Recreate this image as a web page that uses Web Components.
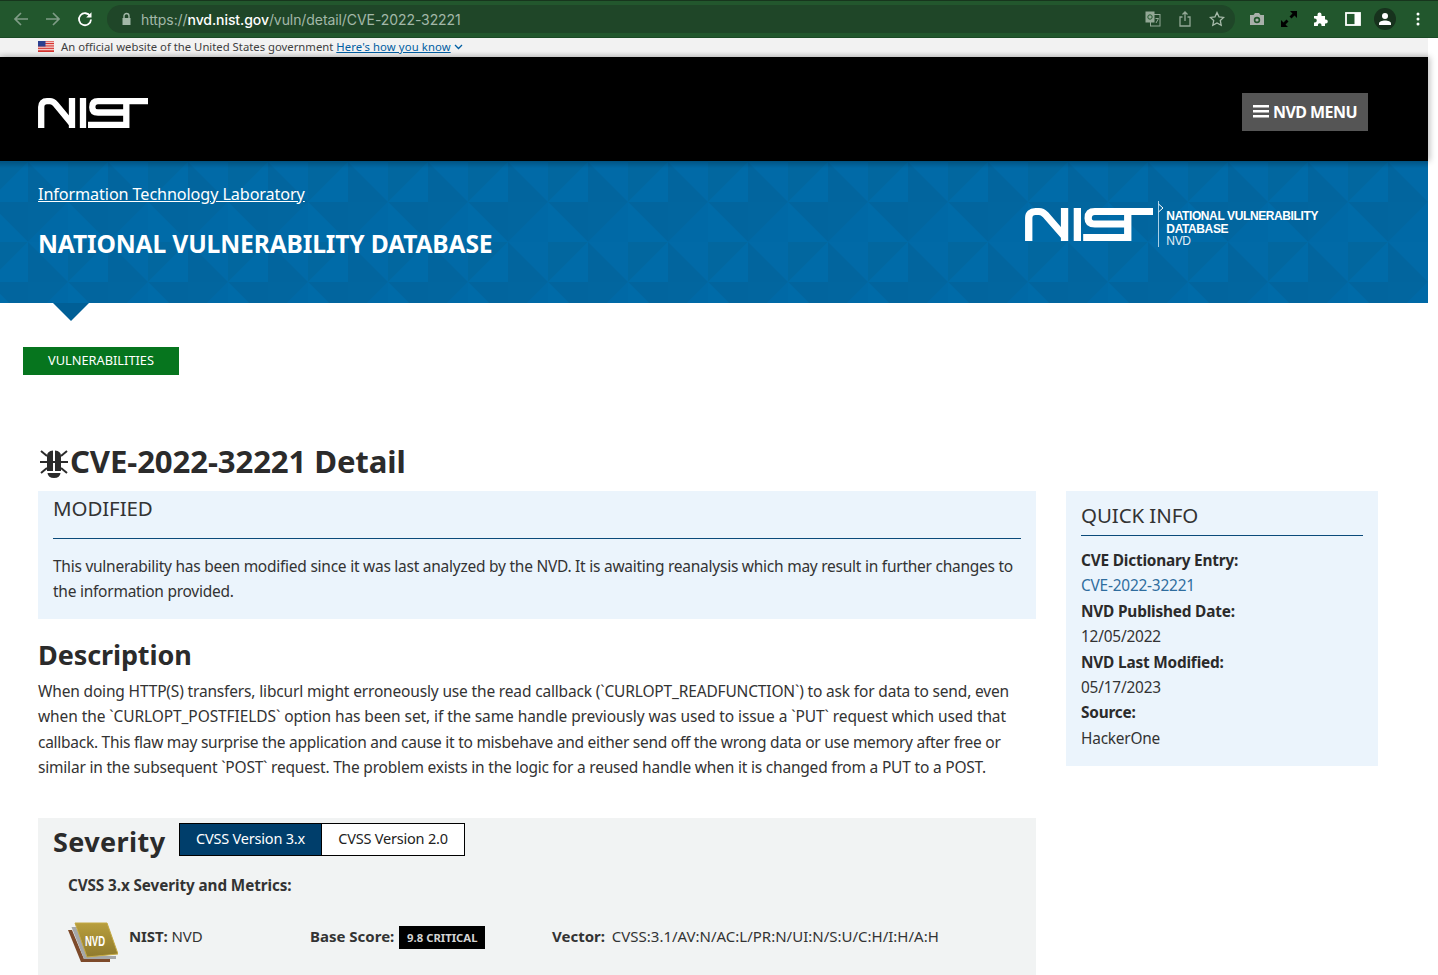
<!DOCTYPE html>
<html lang="en">
<head>
<meta charset="utf-8">
<title>NVD - CVE-2022-32221</title>
<style>
  html, body { margin: 0; height: 975px; overflow: hidden; background: #fff; }
  body { font-family: "Noto Sans", "Liberation Sans", sans-serif; color: #2b2b2b; }
  .content { display: flex; gap: 30px; padding-left: 38px; width: 1340px; box-sizing: border-box; }
  .left { width: 998px; flex: none; }
  .l1 { letter-spacing: -.163px; }
  .l2 { letter-spacing: -.09px; }
  .l3 { letter-spacing: -.265px; }
</style>
</head>
<body>
<browser-bar></browser-bar>
<gov-banner></gov-banner>
<nist-header></nist-header>
<nvd-banner></nvd-banner>
<nav-tab>VULNERABILITIES</nav-tab>
<page-title>CVE-2022-32221 Detail</page-title>
<div class="content">
  <div class="left">
    <status-box heading="MODIFIED">This vulnerability has been modified since it was last analyzed by the NVD. It is awaiting reanalysis which may result in further changes to<br>the information provided.</status-box>
    <vuln-description><span class="l1">When doing HTTP(S) transfers, libcurl might erroneously use the read callback (`CURLOPT_READFUNCTION`) to ask for data to send, even</span><br><span class="l2">when the `CURLOPT_POSTFIELDS` option has been set, if the same handle previously was used to issue a `PUT` request which used that</span><br><span class="l3">callback. This flaw may surprise the application and cause it to misbehave and either send off the wrong data or use memory after free or</span><br>similar in the subsequent `POST` request. The problem exists in the logic for a reused handle when it is changed from a PUT to a POST.</vuln-description>
    <severity-panel></severity-panel>
  </div>
  <quick-info></quick-info>
</div>

<script>
const NIST_LOGO = `
  <g fill="none" stroke="currentColor" stroke-width="6.300">
    <path d="M3.200 30V9Q3.200 3.200 9 3.200H12Q15 3.200 17.500 6L34 26"/>
    <path d="M34 0V30"/>
    <path d="M45 0V30"/>
    <path d="M110 3.200H60Q54.300 3.200 54.300 9V9.500Q54.300 14.500 60 14.500H88"/>
    <path d="M88.300 3V30"/>
    <path d="M91 26.800H50"/>
  </g>`;

class BrowserBar extends HTMLElement {
  constructor() {
    super();
    this.attachShadow({ mode: "open" }).innerHTML = `
      <style>
        :host { display: flex; align-items: center; height: 38px; box-sizing: border-box; background: #22572d; border-top: 1px solid #17351d; border-bottom: 1px solid #1a4a25; }
        svg { display: block; flex: none; }
        .nav { display: flex; gap: 16px; padding-left: 13px; align-items: center; }
        .omni { margin-left: 14px; width: 1128px; height: 28px; background: #1f4628; border-radius: 14px; display: flex; align-items: center; box-sizing: border-box; padding: 0 10px 0 14px; }
        .url { font: 14px Inter, "Liberation Sans", sans-serif; letter-spacing: -.08px; color: #a3b8a8; margin-left: 9px; flex: 1; white-space: nowrap; }
        .url b { color: #fff; font-weight: 500; }
        .omni-icons { display: flex; gap: 16px; }
        .tools { display: flex; align-items: center; gap: 16px; margin-left: 14px; }
        .avatar { width: 22px; height: 22px; border-radius: 50%; background: #17321d; display: flex; align-items: center; justify-content: center; margin-left: -3px; }
      </style>
      <div class="nav">
        <svg width="16" height="16" viewBox="0 0 16 16" fill="none" stroke="#7f9c86" stroke-width="1.700"><path d="M15 8H2M8 2 2 8l6 6"/></svg>
        <svg width="16" height="16" viewBox="0 0 16 16" fill="none" stroke="#7f9c86" stroke-width="1.700"><path d="M1 8h13M8 2l6 6-6 6"/></svg>
        <svg width="16" height="16" viewBox="0 0 16 16" fill="none" stroke="#fff" stroke-width="1.800"><path d="M13.200 5.200A6 6 0 1 0 14 8.500"/><path d="M14.500 1.200v5.300H9.200" fill="#fff" stroke="none"/></svg>
      </div>
      <div class="omni">
        <svg width="11" height="14" viewBox="0 0 11 14"><path d="M1.500 6h8v7h-8z" fill="#a3b8a8"/><path d="M3 6V4a2.500 2.500 0 0 1 5 0v2" fill="none" stroke="#a3b8a8" stroke-width="1.400"/></svg>
        <span class="url">https://<b>nvd.nist.gov</b>/vuln/detail/CVE-2022-32221</span>
        <div class="omni-icons">
          <svg width="16" height="16" viewBox="0 0 16 16"><rect x="5.500" y="3.500" width="9.500" height="11.500" fill="none" stroke="#93a896"/><rect x="0.500" y="0.500" width="9" height="11" fill="#93a896"/><circle cx="5" cy="6" r="2.200" fill="none" stroke="#22572d"/><path d="M10.500 7.500h3M11 12l2.500-4.500" stroke="#93a896"/></svg>
          <svg width="16" height="16" viewBox="0 0 16 16" fill="none" stroke="#93a896" stroke-width="1.300"><path d="M5.500 6H3v9h10V6h-2.500M8 10V1M5.500 3.500 8 1l2.500 2.500"/></svg>
          <svg width="16" height="16" viewBox="0 0 16 16" fill="none" stroke="#a8bbab" stroke-width="1.300"><path d="m8 1.500 2 4.300 4.700.6-3.400 3.200.9 4.700L8 12l-4.200 2.300.9-4.700L1.300 6.400 6 5.800z"/></svg>
        </div>
      </div>
      <div class="tools">
        <svg width="16" height="16" viewBox="0 0 16 16"><path d="M1 4h3.500L6 2h4l1.500 2H15v10H1z" fill="#a8b0aa"/><circle cx="8" cy="9" r="2.400" fill="none" stroke="#22572d" stroke-width="1.600"/></svg>
        <svg width="16" height="16" viewBox="0 0 16 16" fill="#000"><path d="M9 0h7v7l-2.500-2.500-3 3L8.500 5.500l3-3zM7 16H0V9l2.500 2.500 3-3 2 2-3 3z"/></svg>
        <svg width="16" height="16" viewBox="0 0 16 16" fill="#fff"><path d="M1 5h3.500V3.500a2 2 0 0 1 4 0V5H12v3.500h.8a2 2 0 0 1 0 4H12V15H8.500v-1a1.800 1.800 0 0 0-3.600 0v1H1v-3.500h.8a2 2 0 0 0 0-4H1z"/></svg>
        <svg width="16" height="16" viewBox="0 0 16 16"><rect x="1" y="2" width="14" height="12" fill="none" stroke="#fff" stroke-width="1.800"/><rect x="9.500" y="2" width="5.500" height="12" fill="#fff"/></svg>
        <div class="avatar"><svg width="14" height="14" viewBox="0 0 14 14" fill="#fff"><circle cx="7" cy="4" r="3"/><path d="M1 13v-1.500C1 9.500 4 8.500 7 8.500s6 1 6 3V13z"/></svg></div>
        <svg width="4" height="14" viewBox="0 0 4 14" fill="#fff" style="margin-left:4px"><circle cx="2" cy="2" r="1.500"/><circle cx="2" cy="7" r="1.500"/><circle cx="2" cy="12" r="1.500"/></svg>
      </div>
    `;
  }
}

class GovBanner extends HTMLElement {
  constructor() {
    super();
    this.attachShadow({ mode: "open" }).innerHTML = `
      <style>
        :host { display: flex; align-items: center; width: 1428px; height: 19px; box-sizing: border-box; padding: 0 0 2px 38px; background: linear-gradient(#f2f2f2 70%, #e2e2e2); font-size: 11.300px; color: #404040; white-space: nowrap; }
        svg { flex: none; margin-right: 7px; }
        a { color: #005ea2; margin-left: 3px; text-decoration: underline; letter-spacing: .1px; }
        .chev { margin: 0 0 0 3px; }
      </style>
      <svg width="16" height="11" viewBox="0 0 16 11"><rect width="16" height="11" fill="#fff"/><path d="M0 .8h16M0 2.500h16M0 4.200h16M0 5.900h16M0 7.600h16M0 9.300h16M0 10.500h16" stroke="#d5342f"/><rect width="7.500" height="5.500" fill="#2c3f8f"/></svg>
      <span>An official website of the United States government</span>
      <a href="#">Here's how you know </a>
      <svg class="chev" width="9" height="6" viewBox="0 0 9 6" fill="none" stroke="#005ea2" stroke-width="1.300"><path d="m1 1 3.500 3.500L8 1"/></svg>
    `;
  }
}

class NistHeader extends HTMLElement {
  constructor() {
    super();
    this.attachShadow({ mode: "open" }).innerHTML = `
      <style>
        :host { display: flex; align-items: center; justify-content: space-between; width: 1428px; height: 104px; box-sizing: border-box; padding: 0 60px 0 38px; background: #000; color: #fff; box-shadow: 2px 0 6px rgba(0,0,0,.25); position: relative; }
        svg.logo { display: block; margin-top: 7px; }
        button { display: flex; align-items: center; gap: 4px; width: 126px; height: 38px; border: 0; padding: 0 0 0 11px; margin-top: 5px; background: #555; color: #fff; font: 700 16px "Noto Sans", sans-serif; letter-spacing: -.55px; white-space: nowrap; }
      </style>
      <svg class="logo" width="110" height="30" viewBox="0 0 110 30">${NIST_LOGO}</svg>
      <button>
        <svg width="16" height="13" viewBox="0 0 16 13" fill="#fff"><path d="M0 0h16v2.600H0zM0 5h16v2.600H0zM0 10h16v2.600H0z"/></svg>
        NVD MENU
      </button>
    `;
  }
}

class NvdBanner extends HTMLElement {
  constructor() {
    super();
    this.attachShadow({ mode: "open" }).innerHTML = `
      <style>
        :host { display: block; width: 1428px; height: 142px; position: relative; background: #0068a5; color: #fff; }
        .bg { position: absolute; inset: 0; width: 100%; height: 100%; }
        .shade { position: absolute; left: 0; right: 0; top: 0; height: 7px; background: linear-gradient(rgba(0,0,0,.22), rgba(0,0,0,0)); }
        .inner { position: relative; display: flex; justify-content: space-between; height: 100%; padding: 0 110px 0 38px; box-sizing: border-box; }
        a { display: block; color: #fff; font-size: 16.200px; letter-spacing: -.1px; margin-top: 21px; line-height: 24px; }
        h1 { margin: 21px 0 0; font-size: 24.600px; line-height: 34px; font-weight: 700; letter-spacing: -.15px; white-space: nowrap; }
        .brand { display: flex; align-items: flex-start; margin-top: 40px; }
        .brand svg.logo { margin: 7px 0 0; display: block; }
        .sep { margin: 0 0 0 4px; display: block; }
        .txt { font: 700 12px/12.500px "Liberation Sans", sans-serif; letter-spacing: -.39px; margin: 9px 0 0 1px; white-space: nowrap; }
        .txt span { font-weight: 400; display: block; color: #e2eef6; }
        .notch { position: absolute; left: 53px; top: 142px; width: 0; height: 0; border-left: 18px solid transparent; border-right: 18px solid transparent; border-top: 18px solid #005f96; }
      </style>
      <svg class="bg">
        <defs>
          <pattern id="tri" width="80" height="80" patternUnits="userSpaceOnUse" patternTransform="translate(28 1)">
            <path d="M0 0H40V40z" fill="#016aa7"/>
            <path d="M0 0V40H40z" fill="#02659e"/>
            <path d="M40 0H80L40 40z" fill="#02679f"/>
            <path d="M80 0V40H40z" fill="#006ba8"/>
            <path d="M0 40H40L0 80z" fill="#02669f"/>
            <path d="M40 40V80H0z" fill="#0069a6"/>
            <path d="M40 40H80V80z" fill="#02659e"/>
            <path d="M40 40V80H80z" fill="#006ba8"/>
          </pattern>
        </defs>
        <rect width="100%" height="100%" fill="url(#tri)"/>
      </svg>
      <div class="shade"></div>
      <div class="inner">
        <div>
          <a href="#">Information Technology Laboratory</a>
          <h1>NATIONAL VULNERABILITY DATABASE</h1>
        </div>
        <div class="brand">
          <svg class="logo" width="128" height="33" viewBox="0 0 110 30" preserveAspectRatio="none">${NIST_LOGO}</svg>
          <svg class="sep" width="8" height="46" viewBox="0 0 8 46" fill="none" stroke="#a9cfe6"><path d="M1.500 0V46"/><path d="M1.500 3 6 7 1.500 11" stroke="#fff"/></svg>
          <div class="txt">NATIONAL VULNERABILITY<br>DATABASE<span>NVD</span></div>
        </div>
      </div>
      <div class="notch"></div>
    `;
  }
}

class NavTab extends HTMLElement {
  constructor() {
    super();
    this.attachShadow({ mode: "open" }).innerHTML = `
      <style>
        :host { display: block; width: 156px; height: 28px; margin: 44px 0 0 23px; background: #06751e; color: #fff; font-size: 12.800px; line-height: 27px; letter-spacing: 0; text-align: center; }
      </style>
      <slot></slot>
    `;
  }
}

class PageTitle extends HTMLElement {
  constructor() {
    super();
    this.attachShadow({ mode: "open" }).innerHTML = `
      <style>
        :host { display: flex; align-items: center; height: 46px; margin-top: 63px; padding: 0 0 7px 38px; font-size: 31.150px; font-weight: 700; letter-spacing: -.12px; color: #2b2b2b; white-space: nowrap; }
        svg { flex: none; margin-top: 2px; margin-right: 0; }
      </style>
      <svg width="32" height="32" viewBox="0 0 32 32" fill="#2b2b2b">
        <path d="M9 10Q9 5 15 4.500V25H9zM23 10Q23 5 17 4.500V25H23z"/>
        <path d="M9.500 27H22.500Q22 32 16 32T9.500 27z"/>
        <path d="M3 5l6 5M29 5l-6 5M2 16H30M3 27l6-5M29 27l-6-5" stroke="#2b2b2b" stroke-width="2" fill="none"/>
      </svg>
      <slot></slot>
    `;
  }
}

class StatusBox extends HTMLElement {
  constructor() {
    super();
    this.attachShadow({ mode: "open" }).innerHTML = `
      <style>
        :host { display: block; height: 128px; box-sizing: border-box; padding: 0 15px; background: #ebf4fc; }
        h3 { margin: 0; height: 48px; box-sizing: border-box; border-bottom: 1px solid #0a4a7a; padding-top: 2px; font-size: 20.500px; line-height: 30px; font-weight: 400; letter-spacing: -.1px; color: #333; }
        p { margin: 15px 0 0; font-size: 15.500px; line-height: 25.400px; letter-spacing: -.25px; white-space: nowrap; color: #333; }
      </style>
      <h3>${this.getAttribute("heading")}</h3>
      <p><slot></slot></p>
    `;
  }
}

class VulnDescription extends HTMLElement {
  constructor() {
    super();
    this.attachShadow({ mode: "open" }).innerHTML = `
      <style>
        :host { display: block; height: 199px; color: #333; }
        h3 { margin: 0; padding-top: 16px; font-size: 27px; line-height: 40px; font-weight: 700; letter-spacing: -.1px; color: #2b2b2b; }
        p { margin: 4px 0 0; font-size: 15.500px; line-height: 25.400px; letter-spacing: -.2px; white-space: nowrap; }
      </style>
      <h3>Description</h3>
      <p><slot></slot></p>
    `;
  }
}

class SeverityPanel extends HTMLElement {
  constructor() {
    super();
    this.attachShadow({ mode: "open" }).innerHTML = `
      <style>
        :host { display: block; height: 180px; box-sizing: border-box; background: #f1f3f3; padding: 5px 15px 0; color: #333; }
        .top { display: flex; align-items: flex-start; }
        h3 { margin: -1px 0 0; width: 126px; font-size: 27px; line-height: 40px; font-weight: 700; letter-spacing: .4px; color: #2b2b2b; }
        .tabs { display: flex; }
        .tabs span { display: block; box-sizing: border-box; width: 144px; height: 33px; border: 1px solid #000; background: #fff; color: #222; font-size: 14.500px; line-height: 29px; text-align: center; letter-spacing: -.2px; }
        .tabs span:first-child { width: 142px; background: #003e6b; color: #fff; border-right: 0; }
        h4 { margin: 11px 0 0 15px; font-size: 15.250px; line-height: 24px; font-weight: 700; letter-spacing: -.08px; }
        .row { display: flex; align-items: flex-start; margin: 25px 0 0 15px; font-size: 15px; line-height: 24px; white-space: nowrap; }
        .row svg { flex: none; margin-right: 11px; display: block; }
        .who { width: 181px; margin-top: 2px; letter-spacing: -.1px; }
        .score { width: 242px; margin-top: 2px; display: flex; align-items: flex-start; }
        .badge { display: block; margin: 2px 0 0 5px; width: 86px; height: 23px; background: #000; color: #d4d4d4; font-size: 11.300px; line-height: 24px; font-weight: 700; text-align: center; }
        .vector { margin-top: 2px; }
        .vector b { margin-right: 3px; }
      </style>
      <div class="top">
        <h3>Severity</h3>
        <div class="tabs"><span>CVSS Version 3.x</span><span>CVSS Version 2.0</span></div>
      </div>
      <h4>CVSS 3.x Severity and Metrics:</h4>
      <div class="row">
        <svg width="50" height="42" viewBox="0 0 50 42">
          <defs><linearGradient id="gold" x1="0" y1="0" x2="0" y2="1"><stop offset="0" stop-color="#b89e3d"/><stop offset="1" stop-color="#8f7a2c"/></linearGradient></defs>
          <path d="M0 8H4L16 37H42V40H13z" fill="#7d4a2a"/>
          <path d="M3.500 5H8L20 34H48V37H16z" fill="#a5a7a8"/>
          <path d="M7 1H39L50 32 19 35z" fill="url(#gold)" stroke="#c4a945" stroke-width="1"/>
          <text x="17" y="24" font-family="Liberation Sans, sans-serif" font-size="15" font-weight="700" fill="#fff" textLength="20" lengthAdjust="spacingAndGlyphs">NVD</text>
        </svg>
        <div class="who"><b>NIST:</b> NVD</div>
        <div class="score"><b>Base Score:</b><span class="badge">9.8 CRITICAL</span></div>
        <div class="vector"><b>Vector:</b> CVSS:3.1/AV:N/AC:L/PR:N/UI:N/S:U/C:H/I:H/A:H</div>
      </div>
    `;
  }
}

class QuickInfo extends HTMLElement {
  constructor() {
    super();
    this.attachShadow({ mode: "open" }).innerHTML = `
      <style>
        :host { display: block; width: 312px; height: 275px; box-sizing: border-box; padding: 0 15px; background: #ebf4fc; color: #333; flex: none; }
        h3 { margin: 0; height: 45px; box-sizing: border-box; border-bottom: 1px solid #0a4a7a; padding-top: 9px; font-size: 20.500px; line-height: 30px; font-weight: 400; letter-spacing: -.1px; }
        dl { margin: 12px 0 0; font-size: 15.400px; line-height: 25.400px; letter-spacing: -.2px; }
        dt { font-weight: 700; color: #2b2b2b; letter-spacing: -.2px; }
        dd { margin: 0; }
        a { color: #2f6d9e; text-decoration: none; }
      </style>
      <h3>QUICK INFO</h3>
      <dl>
        <dt>CVE Dictionary Entry:</dt><dd><a href="#">CVE-2022-32221</a></dd>
        <dt>NVD Published Date:</dt><dd>12/05/2022</dd>
        <dt>NVD Last Modified:</dt><dd>05/17/2023</dd>
        <dt>Source:</dt><dd>HackerOne</dd>
      </dl>
    `;
  }
}

customElements.define("browser-bar", BrowserBar);
customElements.define("gov-banner", GovBanner);
customElements.define("nist-header", NistHeader);
customElements.define("nvd-banner", NvdBanner);
customElements.define("nav-tab", NavTab);
customElements.define("page-title", PageTitle);
customElements.define("status-box", StatusBox);
customElements.define("vuln-description", VulnDescription);
customElements.define("severity-panel", SeverityPanel);
customElements.define("quick-info", QuickInfo);
</script>
</body>
</html>
